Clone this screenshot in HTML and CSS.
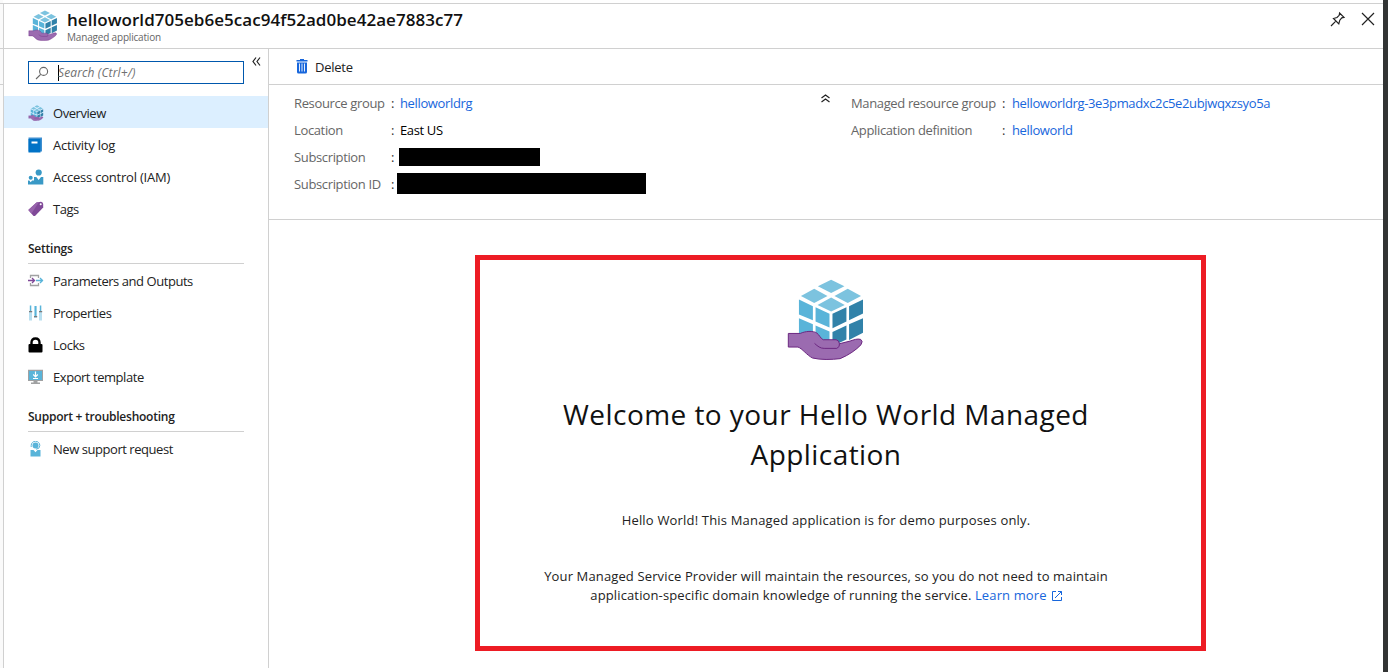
FILE: index.html
```html
<!DOCTYPE html>
<html lang="en">
<head>
<meta charset="utf-8">
<title>Managed application</title>
<link rel="stylesheet" href="styles.css">
</head>
<body>
<svg class="defs" width="0" height="0">
  <symbol id="cube" viewBox="50 25 235 248">
    <g fill="#7cc3df">
      <path d="M183 29l40 20-40 20-40-20z"/><path d="M132 56l40 22-40 21-40-21z"/>
      <path d="M233 56l40 22-40 21-40-21z"/><path d="M183 83l41 22-41 20-41-20z"/>
    </g>
    <g fill="#59b4d9">
      <path d="M86 89l42 20v42l-42-17z"/><path d="M136 112l42 20v41l-42-18z"/>
      <path d="M86 145l42 18v50l-42-18z"/><path d="M136 167l42 18v45l-42-15z"/>
    </g>
    <g fill="#3182a9">
      <path d="M187 132l42-20v43l-42 20z"/><path d="M237 109l42-20v42l-42 20z"/>
      <path d="M187 187l42-20v42l-42 20z"/><path d="M237 163l42-18v44l-42 22z"/>
    </g>
    <path d="M54 191H90C105 184 128 182 140 190C148 196 151 206 159 210H198Q207 212 208 222L240 214C252 210 262 206 272 209Q280 214 273 225C258 241 236 256 210 267C185 270 150 271 127 265C110 257 96 236 83 232H54z" fill="#9b6bb0" stroke="#6b2680" stroke-width="3" stroke-linejoin="round"/>
    <path d="M133 221C143 230 150 236 162 236H200Q210 232 208 221" fill="none" stroke="#6b2680" stroke-width="3"/>
  </symbol>
</svg>
<div class="app">
  <div class="rail"></div>
  <div class="blade">
    <header class="head">
      <svg class="head-icon"><use href="#cube"/></svg>
      <div class="titles">
        <h1>helloworld705eb6e5cac94f52ad0be42ae7883c77</h1>
        <p>Managed application</p>
      </div>
      <div class="actions">
        <svg width="16" height="16" viewBox="0 0 16 16" fill="none" stroke="#222" stroke-width="1.2"><path d="M1 15L5.8 10.200M3.500 7.500L8.800 12.800L9.800 9.200L11.800 6.800L14 6.300L9.600 2L9.200 4.300L7 6.500z"/></svg>
        <svg width="14" height="14" viewBox="0 0 14 14" fill="none" stroke="#222" stroke-width="1.200"><path d="M1 1l12 12M13 1L1 13"/></svg>
      </div>
    </header>
    <div class="body">
      <aside class="side">
        <div class="search">
          <svg width="14" height="14" viewBox="0 0 14 14" fill="none" stroke="#666" stroke-width="1.100"><circle cx="8.600" cy="5.400" r="4"/><path d="M5.700 8.300L1 13"/></svg>
          <span class="caret"></span><span class="hint">Search (Ctrl+/)</span>
        </div>
        <svg class="collapse" width="9" height="9" viewBox="0 0 9 9" fill="none" stroke="#222" stroke-width="1.200"><path d="M4 .5L1 4.500L4 8.500M8 .5L5 4.500L8 8.500"/></svg>
        <nav>
          <a class="item on"><svg viewBox="0 0 16 16"><use href="#cube"/></svg><span>Overview</span></a>
          <a class="item wide"><svg viewBox="0 0 16 16"><path fill="#3f8fd0" d="M.5.5H14v14H.5z"/><path fill="#0072c6" d="M.5 2H12.500V15.500H.5z"/><path fill="#fff" d="M3.500 4.500h6v2h-6z"/></svg><span>Activity log</span></a>
          <a class="item wide"><svg viewBox="0 0 16 16" fill="#3999c6"><circle cx="10.700" cy="3.500" r="3.100"/><path d="M6 8h2.300l2.400 3L13 8h2.300v7.500H6z"/><circle cx="2.700" cy="8.700" r="2"/><path d="M0 11.500h1.300l1.400 1.700 1.400-1.700H6v4H0z"/></svg><span>Access control (IAM)</span></a>
          <a class="item"><svg viewBox="0 0 16 16"><path fill="#804998" d="M.3 9L8.500 1.500L13 .7Q15 1 15.200 3V6.500L7 15H5.500z"/><path fill="#9763ab" d="M.3 9L8.500 1.500L11 1 3.500 12.500z"/><circle cx="12.700" cy="3.300" r="1" fill="#fff"/></svg><span>Tags</span></a>
          <h2 class="s1">Settings</h2>
          <a class="item"><svg viewBox="0 0 16 16" fill="none"><path stroke="#a0a1a2" stroke-width="1.300" d="M2.500 5V2.500h8V5M2.500 10v2.500h8V10"/><path stroke="#804998" stroke-width="1.300" d="M0 7.500h6M4 5l2.500 2.500L4 10"/><path stroke="#59b4d9" stroke-width="1.300" d="M8 7.500h7M12 5l2.500 2.500L12 10"/></svg><span>Parameters and Outputs</span></a>
          <a class="item"><svg viewBox="0 0 16 16"><path fill="#b8dff0" d="M1 6h3v9.500H1zM6 1h3v12H6zM11 6h3v9.500h-3z"/><path fill="#59b4d9" d="M1.800 .5h1.500v6H1.800zM6.800 1h1.500v10H6.800zM11.800.5h1.500v6h-1.500z"/><path fill="#7a7a7a" d="M1 6h3.200v1.300H1zM6 11h3.200v1.300H6zM11 6h3.200v1.300H11z"/></svg><span>Properties</span></a>
          <a class="item"><svg viewBox="0 0 16 16"><rect x=".5" y="7" width="14" height="8.500" rx="1" fill="#000"/><path d="M3.500 8V5.500Q3.500 1.500 7.500 1.500T11.500 5.500V8" fill="none" stroke="#000" stroke-width="2.400"/></svg><span>Locks</span></a>
          <a class="item"><svg viewBox="0 0 16 16"><path fill="#a0a1a2" d="M0 .8h15V12H0zM5.500 12h4v1.800h-4zM3 13.500h9V15H3z"/><path fill="#59b4d9" d="M1 2h13v9H1z"/><path d="M7.500 2.500v5M5.200 5.500l2.300 2.300 2.300-2.300M5 9.500h5" fill="none" stroke="#fff" stroke-width="1.200"/></svg><span>Export template</span></a>
          <h2 class="s2">Support + troubleshooting</h2>
          <a class="item"><svg viewBox="0 0 16 16"><circle cx="7.500" cy="4.500" r="3" fill="#59b4d9"/><path fill="#59b4d9" d="M2.500 9h3l2 2.200 2-2.200h3v6.500h-10z"/><path d="M3.200 6V4.500a4.300 4.300 0 0 1 8.600 0Q11.800 8 8 8.200" fill="none" stroke="#59b4d9"/></svg><span>New support request</span></a>
        </nav>
      </aside>
      <main class="main">
        <div class="toolbar">
          <svg width="12" height="15" viewBox="0 0 12 15"><path fill="#1766dc" d="M4 0h4v1h3.500v1.500H.5V1H4zM1 3.500h10V13q0 1.500-1.500 1.500h-7Q1 14.500 1 13z"/><path stroke="#fff" d="M3.500 4.500v8M6 4.500v8M8.500 4.500v8" stroke-width=".9"/></svg>
          <span>Delete</span>
        </div>
        <section class="facts">
          <dl class="left">
            <dt>Resource group</dt><i>:</i><dd class="link">helloworldrg</dd>
            <dt>Location</dt><i>:</i><dd class="dark">East US</dd>
            <dt>Subscription</dt><i>:</i><dd><b class="bar1"></b></dd>
            <dt>Subscription ID</dt><i>:</i><dd><b class="bar2"></b></dd>
          </dl>
          <svg class="up" width="9" height="9" viewBox="0 0 9 9" fill="none" stroke="#222" stroke-width="1.200"><path d="M.5 4L4.500 1L8.500 4M.5 8L4.500 5L8.500 8"/></svg>
          <dl class="right">
            <dt>Managed resource group</dt><i>:</i><dd class="link">helloworldrg-3e3pmadxc2c5e2ubjwqxzsyo5a</dd>
            <dt>Application definition</dt><i>:</i><dd class="link">helloworld</dd>
          </dl>
        </section>
        <section class="card">
          <div class="inner">
            <svg class="hero"><use href="#cube"/></svg>
            <h3>Welcome to your Hello World Managed<br>Application</h3>
            <p class="demo">Hello World! This Managed application is for demo purposes only.</p>
            <p class="more">Your Managed Service Provider will maintain the resources, so you do not need to maintain<br>application-specific domain knowledge of running the service. <a>Learn more</a><svg width="10" height="10" viewBox="0 0 10 10" fill="none" stroke="#1766dc"><path d="M4 .5H.5v9h9V6M6 .5h3.500V4M9.500.5L3 7"/></svg></p>
          </div>
        </section>
      </main>
    </div>
  </div>
  <div class="edge"></div>
</div>
</body>
</html>
```
FILE: styles.css
```css
* { box-sizing: border-box; margin: 0; padding: 0; }
body { width: 1388px; height: 672px; overflow: hidden; background: #fff; color: #222; font: 13px/20px "Open Sans", "Noto Sans", sans-serif; letter-spacing: -0.25px; }
svg { display: block; flex: none; }
.defs { position: absolute; }
.app { display: flex; height: 672px; }
.rail { width: 3px; height: 668px; background: linear-gradient(#fafafa 3px, #d0d0d0 3px 4px, #fafafa 4px 48px, #d0d0d0 48px 49px, #fafafa 49px 84px, #d0d0d0 84px 85px, #fafafa 85px); }
.blade { width: 1380px; height: 668px; display: flex; flex-direction: column; padding-top: 3px; }
.edge { width: 5px; background: #323434; }
.head { height: 46px; flex: none; display: flex; border: solid #d0d0d0; border-width: 1px 0 1px 1px; padding-left: 24px; }
.head-icon { width: 30px; height: 31px; margin-top: 6px; }
.titles { margin-left: 9px; }
h1 { font-size: 17px; font-weight: 600; line-height: 22px; margin-top: 5px; color: #111; letter-spacing: 0.04px; }
.titles p { font-size: 10px; line-height: 13px; color: #666; letter-spacing: -0.18px; }
.actions { display: flex; gap: 15px; margin: 7px 8px 0 auto; }
.actions svg:last-child { margin-top: 1px; }
.body { flex: 1; display: flex; }
.side { width: 266px; border: solid #d0d0d0; border-width: 0 1px; padding-top: 12px; display: grid; grid-template: 23px 1fr / 240px 24px; }
.search { margin-left: 24px; height: 23px; border: 1px solid #0058ad; display: flex; align-items: center; padding-left: 6px; }
.caret { width: 1px; height: 16px; background: #000; margin-left: 9px; }
.hint { font-size: 12px; font-style: italic; color: #707070; letter-spacing: 0.12px; margin-left: -1px; white-space: nowrap; }
.collapse { margin: -4px 0 0 8px; }
nav { grid-column: 1 / 3; padding-top: 12px; }
.item { height: 32px; display: flex; align-items: center; padding: 2px 0 0 24px; letter-spacing: -0.45px; }
.item.wide { letter-spacing: -0.22px; }
.item svg { width: 16px; height: 16px; margin: -1px 9px 0 0; }
.item span { white-space: nowrap; }
.on { background: #dcefff; }
h2 { font-size: 12px; font-weight: 600; line-height: 20px; width: 216px; margin-left: 24px; border-bottom: 1px solid #d0d0d0; color: #222; letter-spacing: -0.24px; }
.s1 { height: 40px; padding-top: 15px; }
.s2 { height: 40px; padding-top: 15px; }
.main { flex: 1; min-width: 0; display: flex; flex-direction: column; }
.toolbar { height: 36px; flex: none; border-bottom: 1px solid #d0d0d0; display: flex; align-items: center; padding: 1px 0 0 27px; gap: 7px; }
.toolbar svg { margin-top: -2px; }
.facts { height: 135px; flex: none; border-bottom: 1px solid #d0d0d0; display: flex; padding: 5px 0 0 25px; letter-spacing: -0.36px; }
dl { display: grid; grid-auto-rows: 27px; align-content: start; line-height: 27px; white-space: nowrap; }
dt { color: #666; }
i { font-style: normal; color: #333; }
.dark { color: #000; }
.left { grid-template-columns: 97px 9px 260px; width: 527px; }
.right { grid-template-columns: 151px 10px 1fr; margin-left: 21px; }
.up { margin-top: 4px; }
.link, a:not(.item) { color: #1766dc; }
.left b { display: block; background: #000; }
.bar1 { width: 141px; height: 18px; margin: 4px 0 0 -1px; }
.bar2 { width: 249px; height: 21px; margin: 2px 0 0 -3px; }
.card { width: 731px; height: 396px; margin: 35px 0 0 206px; border: 5px solid #ed1c24; }
.inner { width: 692px; display: flex; flex-direction: column; align-items: center; text-align: center; }
.hero { width: 78px; height: 83px; margin-top: 18px; }
h3 { font-weight: 400; font-size: 28px; line-height: 40px; color: #111; margin-top: 33px; letter-spacing: 0.44px; white-space: nowrap; }
.demo { margin-top: 36px; white-space: nowrap; letter-spacing: 0.18px; }
.more { line-height: 19px; margin-top: 37px; white-space: nowrap; letter-spacing: 0.13px; }
.more svg { display: inline-block; margin-left: 5px; vertical-align: -1px; }
```
